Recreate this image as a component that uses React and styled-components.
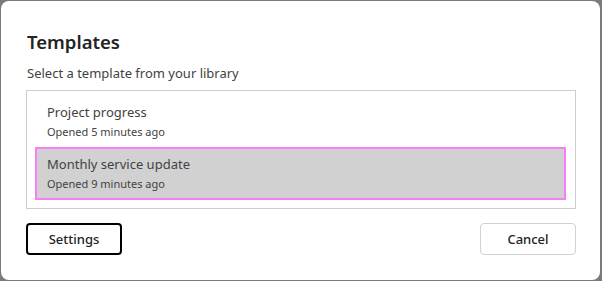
import React from "react";
import styled, { createGlobalStyle } from "styled-components";

const Global = createGlobalStyle`
  html, body { margin: 0; padding: 0; }
  body {
    background: #7b7b7b;
    font-family: "Noto Sans", "Open Sans", sans-serif;
    width: 602px;
    height: 281px;
    overflow: hidden;
  }
`;

const Dialog = styled.div`
  box-sizing: border-box;
  margin: 1px 0 0 1px;
  width: 599px;
  height: 279px;
  background: #ffffff;
  border-radius: 8px;
  padding: 28px 24px 0 25px;
  display: flex;
  flex-direction: column;
  color: #242424;
`;

const Title = styled.h2`
  margin: 0 0 0 1px;
  font-size: 18.5px;
  font-weight: 600;
  line-height: 26px;
  color: #242424;
`;

const Subtitle = styled.p`
  margin: 9px 0 0 1px;
  font-size: 13px;
  line-height: 18px;
  color: #424242;
`;

const List = styled.div`
  margin-top: 8px;
  box-sizing: border-box;
  height: 119px;
  border: 1px solid #cdcdcd;
  padding: 3px 9px 7px 8px;
  display: flex;
  flex-direction: column;
`;

const Item = styled.div`
  box-sizing: border-box;
  height: 53px;
  padding: ${(p) => (p.$selected ? "5px" : "6px")} 10px 0 10px;
  border: 2px solid ${(p) => (p.$selected ? "#f77ef7" : "transparent")};
  background: ${(p) => (p.$selected ? "#d1d1d1" : "transparent")};
  display: flex;
  flex-direction: column;
`;

const ItemTitle = styled.div`
  font-size: 13px;
  line-height: 20px;
  color: #424242;
`;

const ItemMeta = styled.div`
  font-size: 11px;
  line-height: 20px;
  color: #424242;
`;

const Footer = styled.div`
  margin-top: 14px;
  display: flex;
  justify-content: space-between;
`;

const Button = styled.button`
  box-sizing: border-box;
  width: 96px;
  height: 32px;
  border-radius: 4px;
  background: #ffffff;
  border: ${(p) => (p.$focused ? "2px solid #000000" : "1px solid #d1d1d1")};
  font-family: inherit;
  font-size: 13px;
  font-weight: 500;
  color: #242424;
  padding: 0;
`;

const items = [
  { title: "Project progress", meta: "Opened 5 minutes ago" },
  { title: "Monthly service update", meta: "Opened 9 minutes ago", selected: true },
];

export default function App() {
  return (
    <>
      <Global />
      <Dialog>
        <Title>Templates</Title>
        <Subtitle>Select a template from your library</Subtitle>
        <List>
          {items.map((it) => (
            <Item key={it.title} $selected={it.selected}>
              <ItemTitle>{it.title}</ItemTitle>
              <ItemMeta>{it.meta}</ItemMeta>
            </Item>
          ))}
        </List>
        <Footer>
          <Button $focused>Settings</Button>
          <Button>Cancel</Button>
        </Footer>
      </Dialog>
    </>
  );
}
